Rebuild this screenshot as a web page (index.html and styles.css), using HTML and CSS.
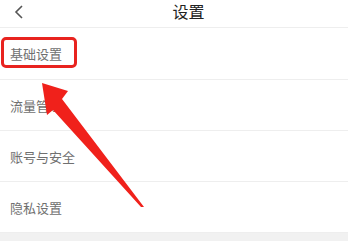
FILE: index.html
```html
<!DOCTYPE html>
<html lang="zh-CN">
<head>
    <meta charset="UTF-8">
    <meta name="viewport" content="width=device-width, initial-scale=1.0">
    <title>设置</title>
    <link rel="stylesheet" href="styles.css">
</head>
<body>
    <div class="page">
        <div class="header">
            <svg class="back" width="12" height="14" viewBox="0 0 12 14">
                <path d="M9 1 L3 7 L9 13" fill="none" stroke="#555" stroke-width="1.6"/>
            </svg>
            <div class="title">设置</div>
        </div>
        <div class="list">
            <div class="row">基础设置</div>
            <div class="row">流量管理</div>
            <div class="row">账号与安全</div>
            <div class="row">隐私设置</div>
        </div>
        <div class="gap"></div>

        <!-- annotation -->
        <div class="mark"></div>
        <svg class="arrow" width="348" height="250" viewBox="0 0 348 250">
            <polygon points="42,83 68,91 62,99 144,207 141,207 53,110 47,115" fill="#f0211b"/>
        </svg>
    </div>
</body>
</html>
```

FILE: styles.css
```css
body {
    margin: 0;
    background-color: #fff;
    font-family: "Noto Sans CJK SC", "Noto Sans", sans-serif;
}
.page {
    position: relative;
    width: 348px;
    height: 250px;
    overflow: hidden;
}
/* top of the bar is cut off in the shot */
.header {
    display: flex;
    align-items: center;
    height: 40px;
    margin-top: -12px;
    border-bottom: 1px solid #eee;
    box-sizing: border-box;
}
.back {
    margin-left: 13px;
    margin-top: 8px;
}
.title {
    flex: 1;
    text-align: center;
    font-size: 16px;
    color: #222;
    margin-top: 6px;
    margin-left: 4px;
}
.list {
    border-bottom: 1px solid #eee;
}
.row {
    height: 51px;
    display: flex;
    align-items: center;
    padding-left: 10px;
    font-size: 13px;
    color: #707070;
    border-top: 1px solid #eee;
    box-sizing: border-box;
}
.row:first-child {
    border-top: none;
}
.gap {
    height: 8px;
    background-color: #f1f1f1;
}
.mark {
    position: absolute;
    left: 1px;
    top: 37px;
    width: 76px;
    height: 31px;
    border: 3px solid #e8231f;
    border-radius: 5px;
    box-sizing: border-box;
}
.arrow {
    position: absolute;
    left: 0;
    top: 0;
}
```
